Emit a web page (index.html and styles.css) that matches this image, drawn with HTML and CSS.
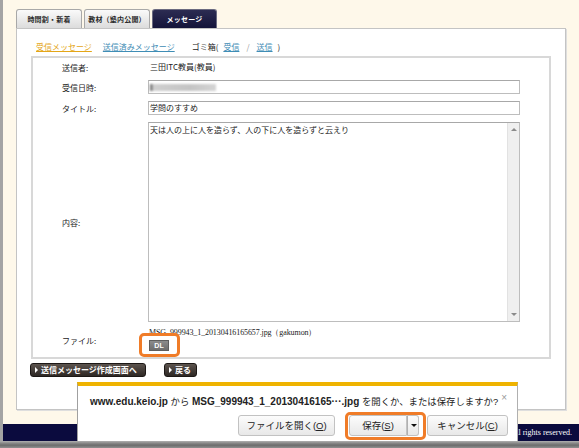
FILE: index.html
```html
<!DOCTYPE html>
<html lang="ja">
<head>
<meta charset="utf-8">
<title>メッセージ</title>
<link rel="stylesheet" href="styles.css">
</head>
<body>
<div class="screen">
  <div class="page">
    <nav class="tabs">
      <div class="tab">時間割・新着</div>
      <div class="tab">教材（塾内公開）</div>
      <div class="tab active">メッセージ</div>
    </nav>
    <section class="panel">
      <div class="links">
        <a class="lnk cur">受信メッセージ</a>
        <a class="lnk">送信済みメッセージ</a>
        <span class="trash">ゴミ箱(<a class="lnk">受信</a><span class="sl">/</span><a class="lnk">送信</a>)</span>
      </div>
      <div class="box">
        <div class="lbl">送信者:</div>
        <div class="val">三田ITC教員(教員)</div>

        <div class="lbl">受信日時:</div>
        <div class="input"><span class="blur"></span></div>

        <div class="lbl">タイトル:</div>
        <div class="input">学問のすすめ</div>

        <div class="lbl">内容:</div>
        <div class="area">
          <div class="area-text">天は人の上に人を造らず、人の下に人を造らずと云えり</div>
          <div class="sbar"><span class="up"></span><span class="down"></span></div>
        </div>

        <div class="lbl">ファイル:</div>
        <div class="file">
          <div class="fname">MSG_999943_1_20130416165657.jpg（gakumon）</div>
          <span class="dlwrap"><span class="dl">DL</span><span class="hl hl-dl"></span></span>
        </div>
      </div>
      <div class="actions">
        <span class="btn">送信メッセージ作成画面へ</span>
        <span class="btn">戻る</span>
      </div>
    </section>
    <footer class="foot">All rights reserved.</footer>
  </div>
  <div class="winbar"></div>

  <div class="dlbar">
    <div class="msg"><b>www.edu.keio.jp</b> から <b>MSG_999943_1_20130416165···.jpg</b> を開くか、または保存しますか?</div>
    <span class="close">×</span>
    <div class="dbtns">
      <span class="dbtn open">ファイルを開く(<u>O</u>)</span>
      <span class="savegrp">
        <span class="dbtn save">保存(<u>S</u>)</span><span class="dbtn drop"><i class="tri"></i></span>
        <span class="hl hl-save"></span>
      </span>
      <span class="dbtn cancel">キャンセル(<u>C</u>)</span>
    </div>
  </div>
</div>
</body>
</html>
```

FILE: styles.css
```css
* { box-sizing: border-box; }
html, body { margin: 0; padding: 0; }
body {
  background: #fef8ea;
  font-family: "Noto Sans CJK JP", sans-serif;
  color: #222;
}
.screen {
  position: relative;
  width: 579px;
  height: 448px;
  display: flex;
  flex-direction: column;
  overflow: hidden;
}
.page {
  flex: 1;
  border-left: 3px solid #a4a4a4;
  padding-top: 9px;
  display: flex;
  flex-direction: column;
}
.winbar {
  height: 7px;
  background: linear-gradient(#b0b0b0 0, #8a8a8a 30%, #6c6c6c 60%, #909090 100%);
}

/* tabs */
.tabs {
  display: flex;
  gap: 2px;
  margin-left: 13px;
  height: 19px;
}
.tab {
  width: 66px;
  height: 19px;
  border: 1px solid #a8a8a8;
  border-bottom: none;
  border-radius: 3px 3px 0 0;
  background: linear-gradient(#fafafa, #dcdcdc);
  font-size: 7px;
  font-weight: bold;
  color: #2a2a2a;
  display: flex;
  align-items: center;
  justify-content: center;
  letter-spacing: 0.2px;
  white-space: nowrap;
}
.tab.active {
  width: 65px;
  background: linear-gradient(#2c2c52, #14143a);
  border-color: #6a6a80;
  color: #fff;
}

/* panel */
.panel {
  margin-left: 13px;
  width: 550px;
  height: 382px;
  background: #fff;
  border: 1px solid #c4c4c4;
  box-shadow: 1px 1px 0 #dedede;
  padding: 0 14px;
}
.links {
  margin-top: 11px;
  height: 14px;
  margin-bottom: 2px;
  padding-left: 5px;
  font-size: 8px;
  line-height: 14px;
  display: flex;
  gap: 11px;
}
.lnk {
  color: #3f8db5;
  text-decoration: underline;
}
.lnk.cur { color: #e4a617; }
.trash { margin-left: 6px; color: #222; }
.trash .lnk { margin: 0 5px; }
.sl { color: #999; margin: 0 2px; }

.box {
  width: 520px;
  height: 303px;
  border: 2px solid #d8d8d8;
  display: grid;
  grid-template-columns: 86px 372px;
  grid-auto-rows: auto;
  row-gap: 7px;
  align-items: center;
  padding: 3px 0 0 29px;
  align-content: start;
  font-size: 8px;
}
.lbl { color: #222; font-size: 8px; }
.val { height: 12px; line-height: 12px; padding-left: 2px; }
.input {
  height: 14px;
  border: 1px solid #bdbdbd;
  border-top-color: #a8a8a8;
  line-height: 12px;
  padding-left: 1px;
  display: flex;
  align-items: center;
}
.blur {
  display: block;
  width: 66px;
  height: 7px;
  background: linear-gradient(90deg, #777 0, #777 2px, #cfcfcf 3px, #c4c4c4 60%, #d4d4d4 100%);
  filter: blur(1px);
}
.area {
  height: 200px;
  border: 1px solid #bdbdbd;
  border-top-color: #a8a8a8;
  display: flex;
}
.area-text {
  flex: 1;
  padding: 1px 1px;
  line-height: 11px;
}
.sbar {
  width: 12px;
  background: #efefef;
  border-left: 1px solid #e2e2e2;
  position: relative;
}
.sbar .up, .sbar .down {
  position: absolute;
  left: 3px;
  width: 0; height: 0;
  border-left: 3px solid transparent;
  border-right: 3px solid transparent;
}
.sbar .up { top: 5px; border-bottom: 3px solid #8a8a8a; }
.sbar .down { bottom: 5px; border-top: 3px solid #8a8a8a; }

.file {
  margin-top: -1px;
  height: 24px;
  padding-left: 1px;
}
.fname {
  font-family: "Liberation Serif", serif;
  font-size: 8px;
  line-height: 10px;
  height: 10px;
  color: #222;
  letter-spacing: -0.1px;
}
.dlwrap {
  position: relative;
  display: inline-block;
  margin-top: 2px;
}
.dl {
  display: block;
  width: 20px;
  height: 11px;
  background: linear-gradient(#8c8c8c, #6e6e6e);
  border: 1px solid #5e5e5e;
  color: #fff;
  font-family: "Liberation Sans", sans-serif;
  font-weight: bold;
  font-size: 7px;
  line-height: 9px;
  text-align: center;
}
.hl {
  position: absolute;
  border: 3px solid #f07c28;
  border-radius: 5px;
}
.hl-dl { top: -7px; left: -10px; right: -11px; bottom: -6px; }

.actions {
  margin-top: 4px;
  margin-left: -1px;
  display: flex;
  gap: 18px;
}
.btn {
  height: 14px;
  padding: 0 5px 0 10px;
  border: 1px solid #1c1816;
  border-radius: 3px;
  background: linear-gradient(#5c544e, #2e2824);
  color: #fff;
  font-size: 8px;
  font-weight: bold;
  line-height: 12px;
  position: relative;
  white-space: nowrap;
}
.btn::before {
  content: "";
  position: absolute;
  left: 4px;
  top: 3px;
  border-top: 3px solid transparent;
  border-bottom: 3px solid transparent;
  border-left: 3px solid #fff;
}
.btn:first-child { width: 116px; }
.btn:last-child { width: 33px; }

.foot {
  margin-top: 14px;
  height: 17px;
  background: #0b0b3e;
  color: #fff;
  font-family: "Liberation Serif", serif;
  font-size: 8px;
  line-height: 17px;
  text-align: right;
  padding-right: 7px;
  white-space: nowrap;
}

/* download notification bar */
.dlbar {
  position: absolute;
  left: 77px;
  top: 382px;
  width: 441px;
  height: 59px;
  background: #fff;
  border-top: 4px solid #efb300;
  border-left: 1px solid #a0a0a0;
  border-right: 1px solid #b0b0b0;
  font-family: "Liberation Sans", "Noto Sans CJK JP", sans-serif;
  font-size: 10px;
  color: #222;
}
.msg {
  position: absolute;
  left: 12px;
  top: 10px;
  white-space: nowrap;
  line-height: 12px;
  font-size: 9.4px;
}
.msg b { font-size: 10px; font-weight: bold; }
.close {
  position: absolute;
  right: 10px;
  top: 6px;
  font-size: 10px;
  color: #999;
}
.dbtns {
  position: absolute;
  left: 160px;
  top: 29px;
  display: flex;
  align-items: center;
}
.dbtn {
  height: 21px;
  border: 1px solid #c2c2c2;
  border-radius: 3px;
  background: linear-gradient(#fcfcfc, #e8e8e8);
  font-size: 9.5px;
  line-height: 19px;
  text-align: center;
  color: #222;
}
.dbtn u { text-decoration: underline; }
.open { width: 97px; }
.savegrp {
  position: relative;
  display: flex;
  margin-left: 14px;
}
.save { width: 58px; border-radius: 3px 0 0 3px; }
.drop {
  width: 12px;
  border-left: 1px solid #b0b0b0;
  border-radius: 0 3px 3px 0;
  position: relative;
}
.tri {
  position: absolute;
  left: 3px;
  top: 8px;
  border-left: 3px solid transparent;
  border-right: 3px solid transparent;
  border-top: 3px solid #111;
}
.hl-save { top: -3px; left: -4px; right: -7px; bottom: -4px; }
.cancel { width: 81px; margin-left: 8px; }
```
